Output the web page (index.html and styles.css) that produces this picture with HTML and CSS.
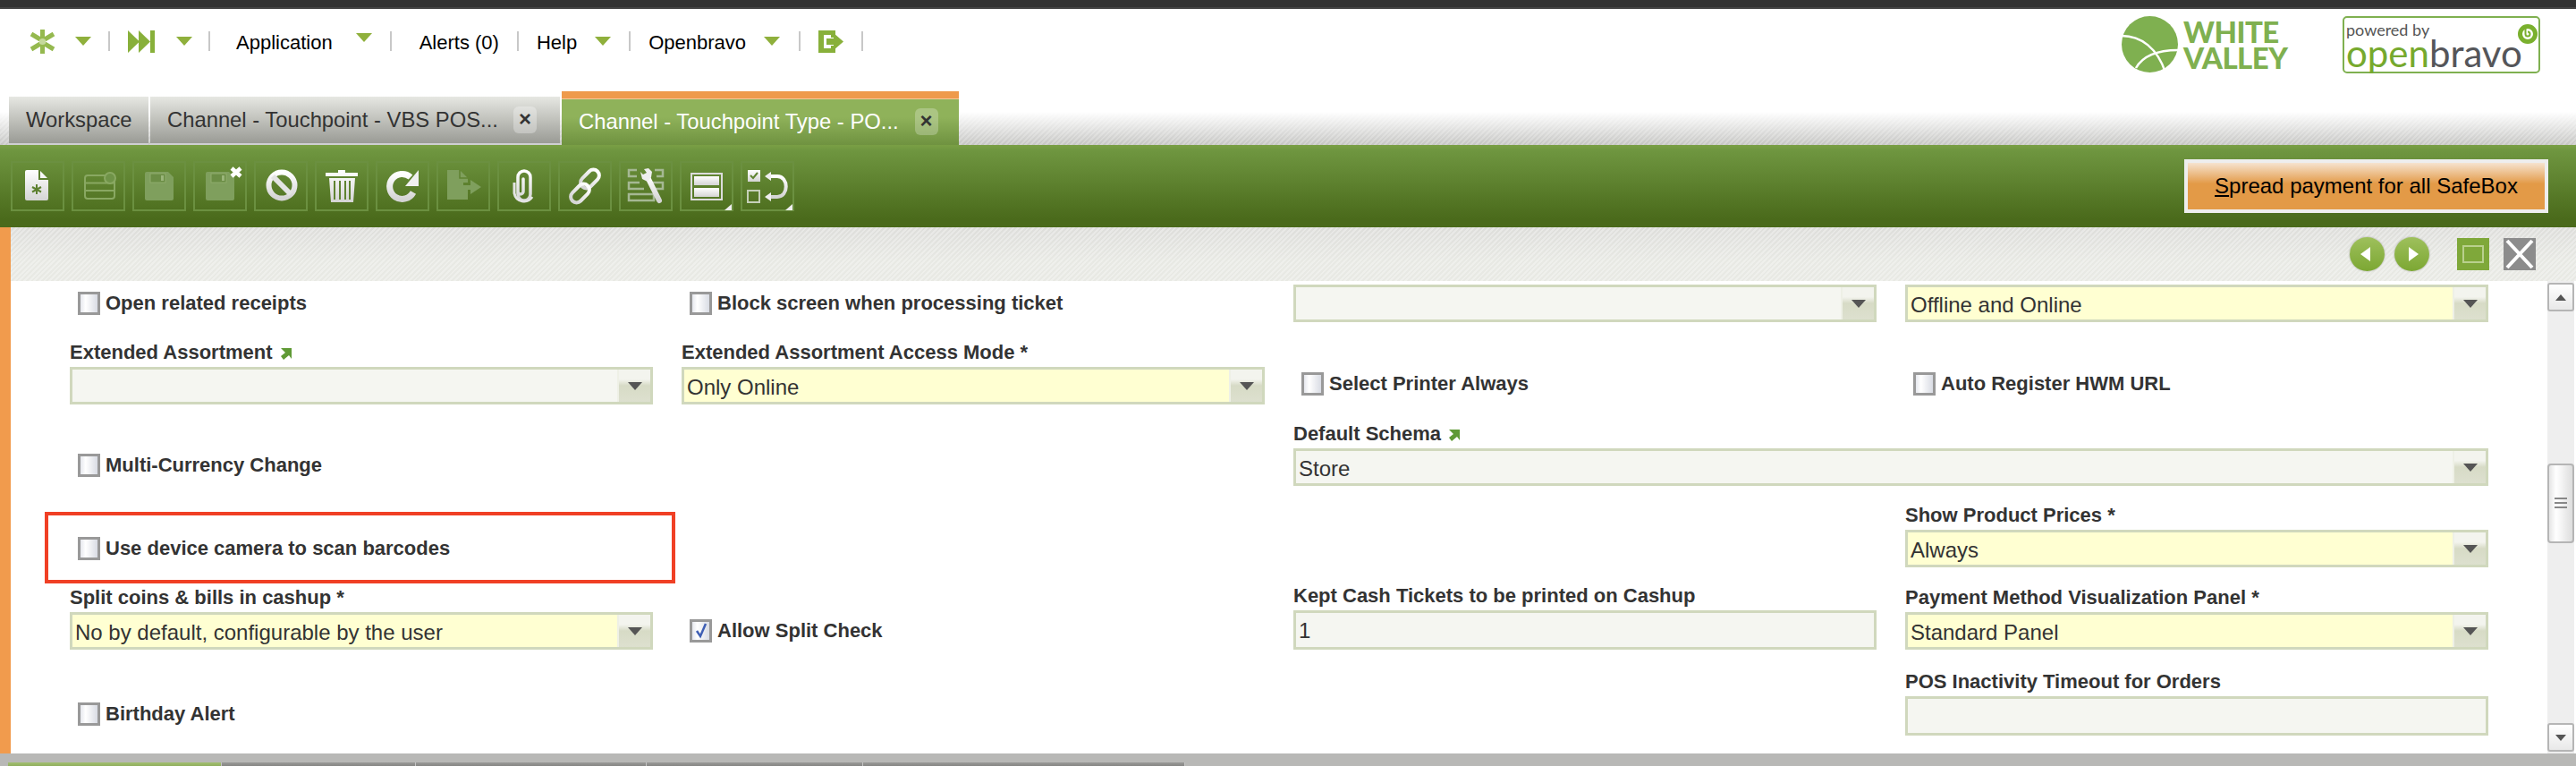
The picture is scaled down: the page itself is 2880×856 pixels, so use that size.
FILE: index.html
```html
<!DOCTYPE html>
<html lang="en">
<head>
<meta charset="utf-8">
<title>Openbravo</title>
<link rel="stylesheet" href="styles.css">
</head>
<body>
<div class="page">
  <div class="topbar"></div>
  <header class="header">
    <nav class="nav">
      <svg class="ic-star" viewBox="0 0 29 27"><g stroke="#8ab23c" stroke-width="5" opacity=".9"><path d="M14.500 0V11M14.500 16V27M2 5L12 11M17 16L27 22M2 22L12 16M17 11L27 5"/></g><circle cx="14.500" cy="13.500" r="3.500" fill="#c5d99b"/></svg>
      <span class="arrow arrow-star"></span>
      <span class="sep"></span>
      <svg class="ic-ff" viewBox="0 0 30 25"><path fill="#88b03a" d="M0 0L13 12.500L0 25ZM12 0L25 12.500L12 25ZM25 0H30V25H25Z"/></svg>
      <span class="arrow arrow-ff"></span>
      <span class="sep"></span>
      <span class="menu menu-app">Application</span>
      <span class="arrow arrow-app"></span>
      <span class="sep"></span>
      <span class="menu menu-alerts">Alerts (0)</span>
      <span class="sep"></span>
      <span class="menu">Help</span>
      <span class="arrow"></span>
      <span class="sep"></span>
      <span class="menu">Openbravo</span>
      <span class="arrow arrow-ob"></span>
      <span class="sep"></span>
      <svg class="ic-exit" viewBox="0 0 28 25"><path fill="#88b03a" d="M0 0H19V8H14V5H6V20H14V17H19V25H0Z"/><path fill="#88b03a" d="M9 9H17V3L28 12.500L17 22V16H9Z"/></svg>
      <span class="sep"></span>
    </nav>
    <div class="logos">
      <div class="wv">
        <svg class="wv-mark" viewBox="0 0 63 63"><ellipse cx="31.500" cy="31.500" rx="31.500" ry="31.500" fill="#7fb050"/><path d="M0 22C22 22 40 36 49 63M16 58C24 44 42 38 63 38" fill="none" stroke="#fff" stroke-width="2.500"/></svg>
        <div class="wv-text">WHITE<br>VALLEY</div>
      </div>
      <div class="ob">
        <div class="ob-powered">powered by</div>
        <div class="ob-name"><span class="ob-open">open</span><span class="ob-bravo">bravo</span></div>
        <svg class="ob-mark" viewBox="0 0 22 22"><circle cx="11" cy="11" r="8.500" fill="none" stroke="#7ab02e" stroke-width="5"/><path d="M8.500 3V11a2.500 2.500 0 1 0 2.500-2.500" fill="none" stroke="#7ab02e" stroke-width="2"/></svg>
      </div>
    </div>
  </header>

  <div class="tabstrip">
    <div class="tab tab-ws">Workspace</div>
    <div class="tab tab-ch"><span>Channel - Touchpoint - VBS POS...</span><span class="tab-x">×</span></div>
    <div class="tab tab-active"><span>Channel - Touchpoint Type - PO...</span><span class="tab-x">×</span></div>
  </div>

  <div class="toolbar">
    <div class="tb-buttons">
      <div class="tb"><svg viewBox="2 2 56 52">
        <defs><linearGradient id="wg" x1="0" y1="0" x2="0" y2="1"><stop offset="0" stop-color="#fff"/><stop offset="1" stop-color="#d4d4d4"/></linearGradient></defs>
        <path fill="url(#wg)" d="M18 10H32L42 20V42a2 2 0 0 1-2 2H18a2 2 0 0 1-2-2V12a2 2 0 0 1 2-2Z"/>
        <path fill="none" stroke="#5d8030" stroke-width="2" d="M32 10V20H42M29 26V37M24 29L34 34.500M24 34.500L34 29"/></svg></div>
      <div class="tb"><svg viewBox="2 2 56 52"><g fill="none" stroke="#89a862" stroke-width="2"><rect x="15" y="16" width="33" height="26" rx="3"/><path d="M15 24.500H48M15 33H48"/></g><circle cx="43" cy="19" r="6" fill="#6f9348" stroke="#89a862" stroke-width="2"/></svg></div>
      <div class="tb"><svg viewBox="2 2 56 52"><path fill="#7f9f5d" d="M16 12H40L46 18V42a2 2 0 0 1-2 2H16a2 2 0 0 1-2-2V14a2 2 0 0 1 2-2Z"/><rect x="20" y="14" width="17" height="10" fill="#6b8d45" stroke="#8fac6d"/><rect x="32" y="16" width="3" height="6" fill="#9ab57a"/></svg></div>
      <div class="tb"><svg viewBox="2 2 56 52"><path fill="#7f9f5d" d="M16 12H40L46 18V42a2 2 0 0 1-2 2H16a2 2 0 0 1-2-2V14a2 2 0 0 1 2-2Z"/><rect x="20" y="14" width="17" height="10" fill="#6b8d45" stroke="#8fac6d"/><rect x="32" y="16" width="3" height="6" fill="#9ab57a"/><path fill="none" stroke="#fff" stroke-width="4.500" d="M43 8L53 17M53 8L43 17"/></svg></div>
      <div class="tb"><svg viewBox="2 2 56 52"><circle cx="31" cy="27" r="14.500" fill="none" stroke="url(#wg)" stroke-width="6"/><path d="M21 17L41 37" stroke="#e4e4e4" stroke-width="6"/></svg></div>
      <div class="tb"><svg viewBox="2 2 56 52"><path fill="url(#wg)" d="M12 13H26V10H34V13H48V17H12ZM16 19H45L43 46H18Z"/><path stroke="#5f8331" stroke-width="2" d="M22 22V43M28 22V43M34 22V43M39 22V43"/></svg></div>
      <div class="tb"><svg viewBox="2 2 56 52"><path fill="none" stroke="url(#wg)" stroke-width="7" d="M39 18A14 14 0 1 0 42 35"/><path fill="#f0f0f0" d="M48 10V28H33Z"/></svg></div>
      <div class="tb"><svg viewBox="2 2 56 52"><path fill="#7f9f5d" d="M12 10H26L35 19V24H30V30H35V43H12ZM30 27H38V21L50 29L38 37V32H30Z"/><path fill="none" stroke="#5f8331" stroke-width="1.500" d="M26 10V19H35"/></svg></div>
      <div class="tb"><svg viewBox="2 2 56 52"><path fill="none" stroke="url(#wg)" stroke-width="3.500" stroke-linecap="round" d="M23 20V37a7 7 0 0 0 14 0V18a7 7 0 0 0-14 0V34a3 3 0 0 0 6 0V20"/><path fill="none" stroke="#e4e4e4" stroke-width="3" d="M19 24V36a11 11 0 0 0 20 4"/></svg></div>
      <div class="tb"><svg viewBox="2 2 56 52"><g fill="none" stroke="url(#wg)" stroke-width="4"><rect x="29" y="8" width="13" height="24" rx="6.500" transform="rotate(45 35.500 20)"/><rect x="18" y="24" width="13" height="24" rx="6.500" transform="rotate(45 24.500 36)"/></g></svg></div>
      <div class="tb"><svg viewBox="2 2 56 52"><g fill="none" stroke="#a5b893" stroke-width="2.500"><path d="M20 10H11V17H20M40 10H49V17H42"/><path d="M23 24H11V31H28M37 24H49V31H40"/><rect x="11" y="37" width="28" height="7"/></g><path fill="none" stroke="url(#wg)" stroke-width="6" stroke-linecap="round" d="M32 18L45 44"/><path fill="#eee" d="M24 12L27 15L31 13L28 9L33 8L37 12L36 18L32 23L26 20Z"/></svg></div>
      <div class="tb"><svg viewBox="2 2 56 52"><rect x="13" y="14" width="34" height="29" fill="none" stroke="#dcdcdc" stroke-width="2"/><rect x="16" y="17" width="28" height="10" fill="url(#wg)"/><rect x="16" y="30" width="28" height="10" fill="url(#wg)"/><path fill="#eee" d="M58 48V55H50Z"/></svg></div>
      <div class="tb"><svg viewBox="2 2 56 52"><rect x="8" y="10" width="14" height="13" fill="url(#wg)"/><path fill="none" stroke="#5f8331" stroke-width="2" d="M11 16L14 19L19 13"/><rect x="8" y="33" width="13" height="13" fill="none" stroke="#c5d0b8" stroke-width="2"/><path fill="none" stroke="url(#wg)" stroke-width="4" d="M32 17H41C54 17 54 40 41 40H32"/><path fill="#eee" d="M27 17L34 12V22ZM27 40L34 35V45Z"/><path fill="#eee" d="M58 48V55H50Z"/></svg></div>
    </div>
    <button class="spread" type="button"><u>S</u>pread payment for all SafeBox</button>
  </div>

  <div class="body">
    <div class="orange"></div>
    <main class="main">
      <div class="band">
        <div class="circ"><svg viewBox="0 0 39 38"><path fill="#fff" d="M12 19L23 11V27Z"/></svg></div>
        <div class="circ"><svg viewBox="0 0 39 38"><path fill="#fff" d="M27 19L16 11V27Z"/></svg></div>
        <div class="sq sq-green"><span class="sq-in"></span></div>
        <div class="sq sq-grey"><svg viewBox="0 0 36 36"><path stroke="#fff" stroke-width="4" d="M4 3L32 33M32 3L4 33"/></svg></div>
      </div>
      <div class="formwrap">
        <div class="form">
          <div class="chk-cell"><span class="chk"></span><span class="chk-label">Open related receipts</span></div>
          <div class="chk-cell"><span class="chk"></span><span class="chk-label">Block screen when processing ticket</span></div>
          <div class="cell"><div class="select"><div class="val"></div><div class="dd"></div></div></div>
          <div class="cell"><div class="select req"><div class="val">Offline and Online</div><div class="dd"></div></div></div>

          <div class="cell"><div class="label">Extended Assortment <svg class="lnk" viewBox="0 0 13 15"><path fill="#5f9a35" d="M1 2H13V14L10 10L4 15L1 11L6 7Z"/></svg></div><div class="select"><div class="val"></div><div class="dd"></div></div></div>
          <div class="cell"><div class="label">Extended Assortment Access Mode *</div><div class="select req"><div class="val">Only Online</div><div class="dd"></div></div></div>
          <div class="chk-cell chk-up"><span class="chk"></span><span class="chk-label">Select Printer Always</span></div>
          <div class="chk-cell chk-up"><span class="chk"></span><span class="chk-label">Auto Register HWM URL</span></div>

          <div class="chk-cell chk-up"><span class="chk"></span><span class="chk-label">Multi-Currency Change</span></div>
          <div></div>
          <div class="cell span2"><div class="label">Default Schema <svg class="lnk" viewBox="0 0 13 15"><path fill="#5f9a35" d="M1 2H13V14L10 10L4 15L1 11L6 7Z"/></svg></div><div class="select"><div class="val">Store</div><div class="dd"></div></div></div>

          <div class="chk-cell"><span class="chk"></span><span class="chk-label">Use device camera to scan barcodes</span></div>
          <div></div>
          <div></div>
          <div class="cell"><div class="label">Show Product Prices *</div><div class="select req"><div class="val">Always</div><div class="dd"></div></div></div>

          <div class="cell"><div class="label">Split coins &amp; bills in cashup *</div><div class="select req"><div class="val">No by default, configurable by the user</div><div class="dd"></div></div></div>
          <div class="chk-cell"><span class="chk"><svg viewBox="0 0 19 20"><path fill="none" stroke="#3f5fb5" stroke-width="2.500" d="M5 10L9 16L15 2"/></svg></span><span class="chk-label">Allow Split Check</span></div>
          <div class="cell"><div class="label">Kept Cash Tickets to be printed on Cashup</div><div class="input">1</div></div>
          <div class="cell"><div class="label">Payment Method Visualization Panel *</div><div class="select req"><div class="val">Standard Panel</div><div class="dd"></div></div></div>

          <div class="chk-cell chk-last"><span class="chk"></span><span class="chk-label">Birthday Alert</span></div>
          <div></div>
          <div></div>
          <div class="cell"><div class="label">POS Inactivity Timeout for Orders</div><div class="input"></div></div>
        </div>
        <div class="redbox"></div>
      </div>
      <div class="scrollbar">
        <div class="sb-btn"><span class="sb-up"></span></div>
        <div class="sb-thumb"><span class="grip"></span></div>
        <div class="sb-btn sb-last"><span class="sb-down"></span></div>
      </div>
    </main>
  </div>

  <footer class="status">
    <span class="st st-1"></span><span class="st st-2"></span><span class="st st-3"></span><span class="st st-4"></span><span class="st st-5"></span>
  </footer>
</div>
</body>
</html>
```
FILE: styles.css
```css
* { box-sizing: border-box; }
html, body { margin: 0; padding: 0; height: 100%; overflow: hidden; background: #fff; }
body { font-family: "Liberation Sans", Arial, sans-serif; color: #333; }
svg { display: block; }
.page { display: flex; flex-direction: column; width: 2880px; height: 856px; overflow: hidden; }

.topbar { height: 10px; flex: none; background: linear-gradient(#333 0 8px, #444 8px); }

.header { height: 92px; flex: none; display: flex; justify-content: space-between; background: #fff; }
.nav { display: flex; align-items: center; gap: 20px; padding: 0 0 20px 33px; font-size: 22px; color: #000; }
.menu { line-height: 26px; white-space: nowrap; margin-top: 3px; }
.menu-app { margin-left: 9px; margin-right: 6px; }
.menu-alerts { margin-left: 11px; }
.sep { width: 2px; height: 22px; background: #c8c8c8; }
.arrow { width: 0; height: 0; border-left: 9px solid transparent; border-right: 9px solid transparent; border-top: 10px solid #8fb03c; }
.arrow-star { margin-left: 2px; margin-right: -1px; }
.arrow-ff { margin-left: 4px; margin-right: -2px; }
.arrow-app { margin-bottom: 8px; }
.arrow-ob { margin-right: 1px; }
.ic-star { width: 29px; height: 27px; }
.ic-ff { width: 30px; height: 25px; }
.ic-exit { width: 28px; height: 25px; }

.logos { display: flex; align-items: flex-start; padding: 8px 40px 0 0; }
.wv { display: flex; gap: 6px; margin-right: 60px; }
.wv-mark { width: 63px; height: 63px; }
.wv-text { width: 118px; font-family: "Lato", sans-serif; font-weight: 900; font-size: 33px; line-height: 29px; color: #7fb050; padding-top: 3px; letter-spacing: -0.5px; }
.ob { position: relative; width: 221px; height: 64px; border: 2px solid #7fb050; border-radius: 5px; padding: 3px 0 0 2px; background: #fff; }
.ob-powered { font-family: "Lato", sans-serif; font-size: 18px; line-height: 20px; color: #555; }
.ob-name { font-family: "Lato", sans-serif; font-size: 42px; line-height: 32px; white-space: nowrap; }
.ob-open { color: #76a92e; }
.ob-bravo { color: #55565a; }
.ob-mark { position: absolute; right: 1px; top: 7px; width: 22px; height: 22px; }

.tabstrip { height: 60px; flex: none; display: flex; align-items: flex-end; padding-left: 10px; gap: 2px;
  background:
    linear-gradient(#fff 23px, rgba(255,255,255,0) 100%),
    repeating-linear-gradient(135deg, #d2d2d0 0 2px, #c6c6c4 2px 4px); }
.tab { height: 54px; display: flex; align-items: center; font-size: 23.800px; white-space: nowrap; color: #333;
  background: linear-gradient(#e6e7e2, #9a9b95); border-bottom: 2px solid #cfcfd2; }
.tab-ws { width: 156px; padding-left: 19px; }
.tab-ch { width: 458px; padding-left: 19px; }
.tab-x { width: 26px; height: 30px; margin-left: 17px; border-radius: 6px; background: rgba(255,255,255,.3); color: #333; font-weight: 700; font-size: 24px; line-height: 28px; text-align: center; }
.tab-active { width: 444px; height: 60px; padding-left: 19px; color: #fff; border-top: 8px solid #ee9a4c; border-bottom: 0; box-shadow: inset 0 1px 0 #f6c79a;
  background: linear-gradient(#8fb25a 40%, #6f9240); }
.tab-active .tab-x { margin-left: 18px; background: rgba(255,255,255,.25); }

.toolbar { height: 92px; flex: none; display: flex; justify-content: space-between; align-items: center; padding: 0 31px 0 12px;
  background: linear-gradient(#7a9f45 0, #6f9640 6px, #4a6a1b 90%, #4a6a1b); }
.tb-buttons { display: flex; gap: 8px; }
.tb { width: 60px; height: 56px; border: 2px solid #6b9040; }
.tb svg { width: 56px; height: 52px; overflow: visible; }
.spread { width: 407px; height: 60px; padding: 0; border: 4px solid #eee; background: linear-gradient(#f6e3cf, #e39a47 45%); font-family: "Liberation Sans", Arial, sans-serif; font-size: 24px; color: #000; }

.body { flex: 1; display: flex; min-height: 0; }
.orange { width: 12px; flex: none; background: #f19b4d; }
.main { flex: 1; min-width: 0; display: grid; grid-template-columns: 1fr 30px 2px; grid-template-rows: 60px 1fr; }
.band { grid-column: 1 / 4; display: flex; justify-content: flex-end; align-items: center; padding-right: 45px;
  background:
    repeating-linear-gradient(135deg, rgba(255,255,255,.3) 0 2px, rgba(255,255,255,0) 2px 4px),
    linear-gradient(#dededb, #e8e9e4 65%); }
.circ { width: 39px; height: 38px; margin-right: 11px; border-radius: 50%; background: linear-gradient(#9ec05c, #7ca733); box-shadow: 0 0 2px #999; }
.sq { width: 36px; height: 36px; margin-left: 16px; }
.sq-green { margin-left: 20px; background: #7fa83a; display: flex; align-items: center; justify-content: center; }
.sq-in { width: 24px; height: 20px; border: 2px solid #b9d08d; }
.sq-grey { background: #8c8c8c; }

.formwrap { position: relative; overflow: hidden; background: #fff; }
.form { display: grid; grid-template-columns: repeat(4, 652px); column-gap: 32px; grid-template-rows: 46px 92px 91px 91px 92px 96px; padding: 0 0 0 66px; align-items: end; }
.span2 { grid-column: span 2; }
.label { font-size: 22px; font-weight: 700; line-height: 26px; margin-bottom: 3px; white-space: nowrap; color: #333; display: flex; align-items: center; gap: 8px; }
.lnk { width: 13px; height: 15px; }
.select { height: 42px; display: flex; border: 3px solid #d0d8bd; background: #f5f6f1; }
.select.req { background: #ffffd2; }
.val { flex: 1; font-size: 24px; line-height: 39px; padding-left: 3px; color: #333; white-space: nowrap; }
.dd { width: 37px; flex: none; display: flex; align-items: center; justify-content: center; border-left: 2px solid #eef0e6; background: linear-gradient(#f3f4ee 30%, #d7dbc6 50%, #dde0cf); }
.dd::after { content: ""; width: 0; height: 0; border-left: 8px solid transparent; border-right: 8px solid transparent; border-top: 9px solid #555; }
.input { height: 44px; border: 3px solid #d0d8bd; background: #f5f6f1; font-size: 24px; line-height: 40px; padding-left: 3px; color: #333; }
.chk-cell { height: 42px; display: flex; align-items: center; padding-left: 9px; gap: 6px; }
.chk-up { margin-bottom: 2px; }
.chk-last { margin-bottom: 3px; }
.chk { width: 25px; height: 26px; border: 3px solid #999; background: linear-gradient(90deg, #e6e8ee, #fff 30%, #d9dce4); flex: none; }
.chk svg { width: 19px; height: 20px; }
.chk-label { font-size: 22px; font-weight: 700; line-height: 26px; white-space: nowrap; color: #333; }
.redbox { position: absolute; left: 38px; top: 258px; width: 705px; height: 80px; border: 4px solid #f04025; }

.scrollbar { background: #eee; display: flex; flex-direction: column; padding: 2px 0; }
.sb-btn { height: 32px; flex: none; border: 2px solid #b5b5b5; border-radius: 3px; background: linear-gradient(#fff, #e8e8e8); display: flex; align-items: center; justify-content: center; }
.sb-last { margin-top: auto; }
.sb-up { width: 0; height: 0; border-left: 6px solid transparent; border-right: 6px solid transparent; border-bottom: 7px solid #555; }
.sb-down { width: 0; height: 0; border-left: 6px solid transparent; border-right: 6px solid transparent; border-top: 7px solid #555; }
.sb-thumb { height: 89px; margin-top: 170px; flex: none; border: 2px solid #b5b5b5; border-radius: 4px; background: linear-gradient(90deg, #e5e5e5, #fff 30%, #ddd); display: flex; align-items: center; justify-content: center; }
.grip { width: 14px; height: 14px; background: repeating-linear-gradient(#888 0 2px, transparent 2px 5px); }

.status { height: 14px; flex: none; display: flex; align-items: flex-end; padding-left: 9px; background: #b8b8b6; }
.st { height: 4px; background: linear-gradient(#9a9a98, #858583); border-right: 1px solid #c4c4c4; }
.st-1 { width: 239px; background: linear-gradient(#a3bf72, #8fae5c); }
.st-2 { width: 217px; }
.st-3 { width: 258px; }
.st-4 { width: 242px; }
.st-5 { width: 360px; }
```
